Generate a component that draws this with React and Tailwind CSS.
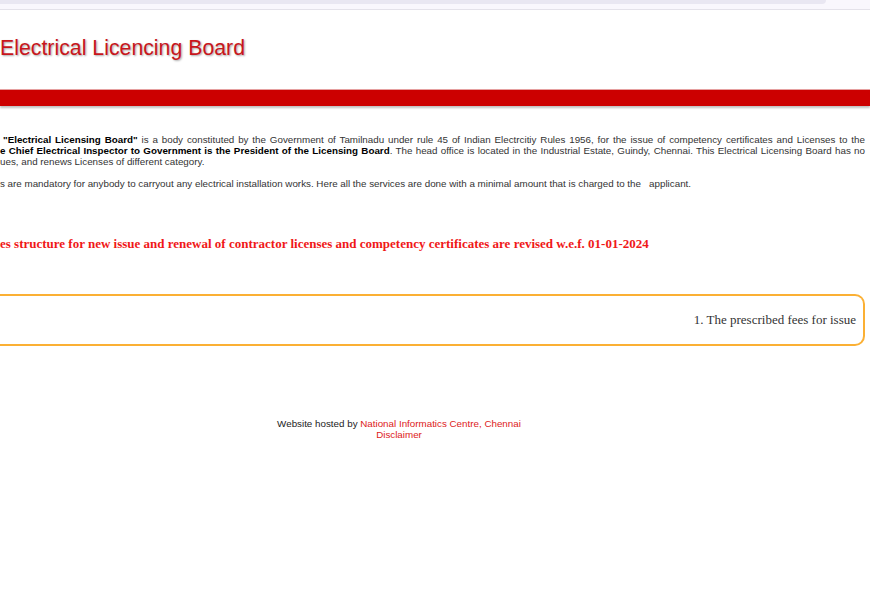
export default function App() {
    return (
        <div className="w-[870px] h-[600px] bg-white overflow-hidden font-['Liberation_Sans',Arial,sans-serif]">
            {/* browser strip */}
            <div className="h-[10px] bg-[#f9f7fd] border-b border-[#e4e2ea]">
                <div className="h-[4px] w-[826px] bg-[#e9e7f2] rounded-br-[8px]" />
            </div>

            {/* title */}
            <div className="h-[79px] pt-[25px]">
                <h1 className="text-[21.3px] leading-[26px] text-[#c8161c] [text-shadow:1px_1px_2px_rgba(0,0,0,0.35)]">
                    Electrical Licencing Board
                </h1>
            </div>

            {/* red bar */}
            <div className="h-[17px] bg-[#cc0000] border-t border-[#e6a0a0] shadow-[0_2px_2px_rgba(0,0,0,0.25)]" />

            {/* intro */}
            <div className="w-[865px] pt-[28px] text-[9.8px] leading-[11px] text-[#333]">
                <p className="text-justify [text-align-last:justify] pl-[3px]">
                    <b className="text-black">"Electrical Licensing Board"</b> is a body constituted by the Government of Tamilnadu under rule 45 of Indian Electrcitiy Rules 1956, for the issue of competency certificates and Licenses to the
                </p>
                <p className="text-justify [text-align-last:justify] whitespace-nowrap">
                    <b className="text-black">e Chief Electrical Inspector to Government is the President of the Licensing Board</b>. The head office is located in the Industrial Estate, Guindy, Chennai. This Electrical Licensing Board has no
                </p>
                <p>ues, and renews Licenses of different category.</p>
                <p className="mt-[11px] whitespace-pre">s are mandatory for anybody to carryout any electrical installation works. Here all the services are done with a minimal amount that is charged to the   applicant.</p>
            </div>

            {/* notice */}
            <p className="mt-[47px] font-['Liberation_Serif','Times_New_Roman',serif] font-bold text-[13px] leading-[16px] text-[#f01818]">
                es structure for new issue and renewal of contractor licenses and competency certificates are revised w.e.f. 01-01-2024
            </p>

            {/* marquee box */}
            <div className="mt-[42px] w-[865px] h-[52px] border-2 border-l-0 border-[#fbb034] rounded-r-[10px] flex items-center justify-end pr-[7px]">
                <span className="font-['Liberation_Serif','Times_New_Roman',serif] text-[13px] text-[#333]">
                    1. The prescribed fees for issue
                </span>
            </div>

            {/* footer */}
            <div className="w-[798px] mt-[72px] text-center text-[9.8px] leading-[11px] text-[#222]">
                <p>Website hosted by <a className="text-[#dd1a1a]">National Informatics Centre, Chennai</a></p>
                <p><a className="text-[#dd1a1a]">Disclaimer</a></p>
            </div>
        </div>
    );
}
